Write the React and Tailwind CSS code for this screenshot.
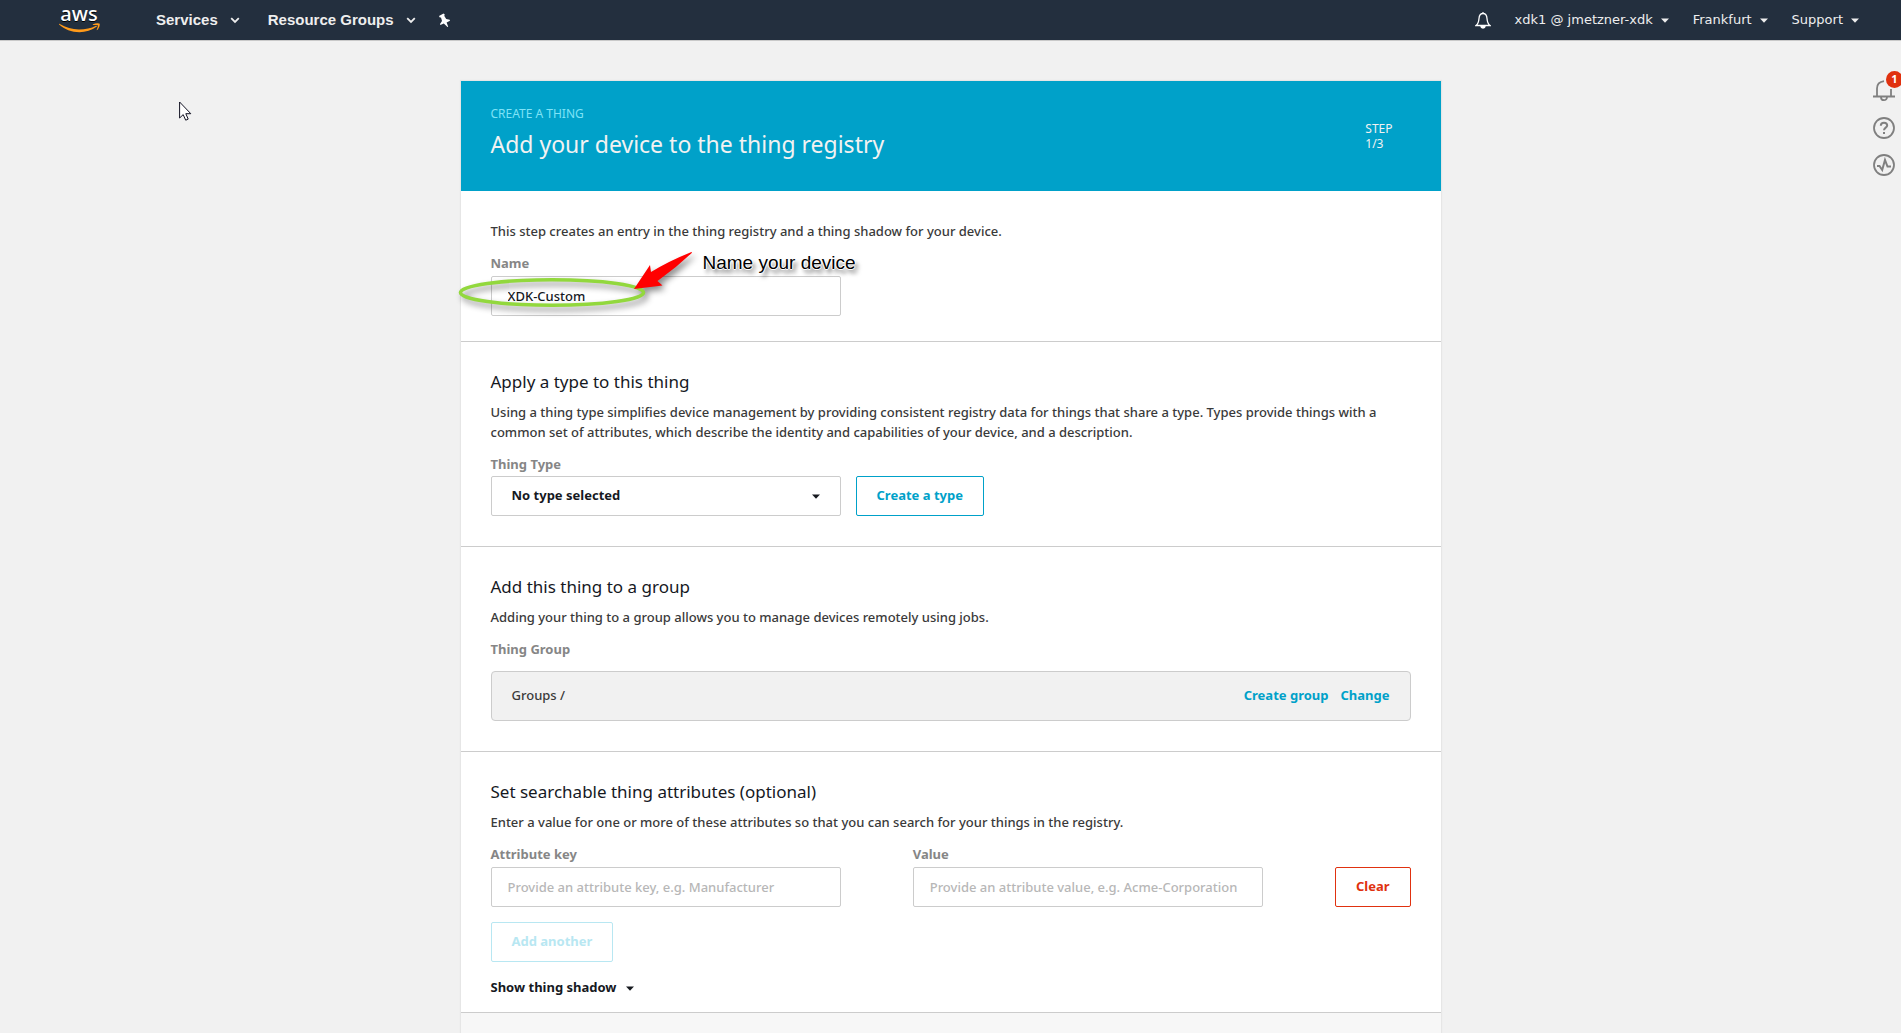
import React from "react";

const body = "text-[13px] font-medium leading-5 text-[#3a3a3a]";
const label = "block font-bold text-[13px] text-[#868686]";
const field =
  "block w-full h-10 rounded-xs border border-[#ccc] bg-white px-4 text-[13px] font-medium text-[#16191f] placeholder:text-[#b7b7b7] outline-none";
const button = "h-10 rounded-xs border px-5 text-[13px] font-bold whitespace-nowrap";

function Chevron() {
  return (
    <svg width="10" height="7" viewBox="0 0 10 7" fill="none" stroke="#eee" strokeWidth="1.800">
      <path d="M1.200 1.200 5 5 8.800 1.200" />
    </svg>
  );
}

function Caret({ className }) {
  return (
    <svg width="8" height="5" viewBox="0 0 8 5" fill="currentColor" className={className}>
      <path d="M0 .5h8L4 4.800z" />
    </svg>
  );
}

function Logo() {
  return (
    <a href="#home" aria-label="AWS home">
      <svg width="42" height="40" viewBox="0 -7 42 40" className="overflow-visible">
        <text x="20" y="14" textAnchor="middle" fontFamily="Noto Sans, sans-serif" fontSize="20" fontWeight="500" fill="#fff">
          aws
        </text>
        <path d="M.3 16.800C7 20.700 13 22.500 20 22.500c6.500 0 12-1.300 17-3.800.8-.3 1.300.6.600 1.100C33 23.400 26.500 25.200 20.500 25.200 12.500 25.200 5.500 22.300.1 17.500c-.4-.4-.2-.9.200-.7z" fill="#ff9a1a" />
        <path d="M34 17.200c2.500-1.200 6.200-1 6.600-.4.500.8-.2 4.300-2.300 6.200-.4.300-.7.100-.6-.3.600-1.300 1.500-3.900 1.100-4.400-.5-.6-3-.4-4.500-.3-.6 0-.7-.5-.3-.8z" fill="#ff9a1a" />
      </svg>
    </a>
  );
}

function TopBar() {
  return (
    <header className="flex h-[41px] items-center justify-between border-b border-[#c9c9c9] bg-[#232f3e] pr-[42px] pl-[59px] text-[#eee] [text-shadow:0_1px_0_#000]">
      <nav className="flex items-center font-['Liberation_Sans',sans-serif] text-[15px] font-bold">
        <Logo />
        <button className="ml-[55px] flex items-center gap-3">
          Services <Chevron />
        </button>
        <button className="ml-7 flex items-center gap-3">
          Resource Groups <Chevron />
        </button>
        <button className="ml-[22px]" aria-label="Pin shortcuts">
          <svg width="14" height="15" viewBox="0 0 14 15" fill="#fff">
            <path d="M5.500.5 1 3l.8 1.600 1.200-.2 1 3.600-2 3 .4 1 3.400-1.500L9.500 14l.7-.2-1.600-4.300 3.400-1.800-.3-1-3.500-.8-2-3.200.7-1z" />
          </svg>
        </button>
      </nav>
      <nav className="flex items-center font-['DejaVu_Sans',sans-serif] text-[13px]">
        <button aria-label="Notifications">
          <svg width="16" height="18" viewBox="0 0 16 18" fill="none" stroke="#fff" strokeWidth="1.300">
            <path d="M8 1v1M1 14.500c2-1.500 2.700-3 3-7C4.200 4 5.500 2.500 8 2.500S11.800 4 12 7.500c.3 4 1 5.500 3 7z" />
            <path d="M6 15.500a2 1.500 0 0 0 4 0z" fill="#fff" />
          </svg>
        </button>
        <button className="ml-6 flex items-center gap-2">
          xdk1 @ jmetzner-xdk <Caret />
        </button>
        <button className="ml-6 flex items-center gap-2">
          Frankfurt <Caret />
        </button>
        <button className="ml-6 flex items-center gap-2">
          Support <Caret />
        </button>
      </nav>
    </header>
  );
}

function SideTools() {
  return (
    <aside className="absolute top-[80px] right-[6px] flex flex-col gap-[15px] text-[#808080]">
      <button className="relative" aria-label="Alerts">
        <svg width="22" height="22" viewBox="0 0 22 22" fill="none" stroke="currentColor" strokeWidth="1.800">
          <path d="M0 16.500h22M4 16V8.500C4 4.500 6.500 1.800 11 1.200M18 16V9M8 17.200a3 3 0 0 0 6 0" />
        </svg>
        <span className="absolute -top-[9px] left-[13px] flex size-[17px] items-center justify-center rounded-full bg-[#e0310f] text-[11px] font-bold text-white">
          1
        </span>
      </button>
      <button aria-label="Help">
        <svg width="22" height="22" viewBox="0 0 22 22" fill="none" stroke="currentColor" strokeWidth="1.800">
          <circle cx="11" cy="11" r="10" />
          <path d="M7.800 8.800C7.800 6.800 9.100 5.700 11 5.700s3.200 1.100 3.200 2.800c0 2.200-3.200 2.200-3.200 4.800M11 15v2" strokeWidth="2" />
        </svg>
      </button>
      <button aria-label="Activity">
        <svg width="22" height="22" viewBox="0 0 22 22" fill="none" stroke="currentColor" strokeWidth="1.800">
          <circle cx="11" cy="11" r="10" />
          <path d="M4 12h2.500l2.700 4 2.800-10 2.500 6.500H18" strokeWidth="2" />
        </svg>
      </button>
    </aside>
  );
}

function NameAnnotation() {
  return (
    <div className="pointer-events-none absolute -top-[30px] -left-[37px] w-[420px]">
      <svg width="250" height="80" viewBox="0 0 250 80" className="[filter:drop-shadow(3px_4px_3px_rgba(0,0,0,0.45))]">
        <ellipse cx="98" cy="46.500" rx="91.500" ry="12.800" fill="none" stroke="#92d83d" strokeWidth="3.600" />
        <path d="M237.500 6Q215 15 197 26L196 19 180 43 208.500 39.500 203.500 35Q222 22 238 6.800z" fill="#f00" />
      </svg>
      <span className="absolute top-[5px] left-[249px] font-['Liberation_Sans',sans-serif] text-[19px] leading-6 whitespace-nowrap text-black [text-shadow:1px_0_#fff,-1px_0_#fff,0_1px_#fff,0_-1px_#fff,3px_4px_4px_rgba(0,0,0,0.6)]">
        Name your device
      </span>
    </div>
  );
}

function Section({ title, children }) {
  return (
    <section className="border-t border-[#ccc] px-[30px] pt-[30px]">
      <h2 className="mb-[10px] text-[17px] leading-5 text-[#16191f]">{title}</h2>
      {children}
    </section>
  );
}

export default function App() {
  return (
    <div className="relative min-h-screen overflow-x-hidden bg-[#f1f1f1] font-['Noto_Sans',sans-serif]">
      <TopBar />
      <SideTools />
      <svg width="13" height="20" viewBox="0 0 13 20" className="pointer-events-none absolute top-[101px] left-[179px]">
        <path d="M.6 1v16l3.600-3.400 2.500 5.600 2.500-1.100-2.400-5.400h5z" fill="#fff" stroke="#112" />
      </svg>

      <main className="mx-auto mt-10 flex min-h-[952px] w-full max-w-[980px] flex-col bg-white shadow-[0_0_1px_1px_#e6e6e6]">
        <div className="flex h-[110px] items-center justify-between bg-[#00a1c9] pr-12 pl-[30px]">
          <div className="pb-1">
            <p className="text-xs leading-5 text-[#7fe3f7]">CREATE A THING</p>
            <h1 className="text-[23px] leading-10 text-[#f2f2f2]">Add your device to the thing registry</h1>
          </div>
          <p className="text-xs leading-[15px] text-[#f2f2f2]">
            STEP
            <br />
            1/3
          </p>
        </div>

        <section className="px-[30px] pt-[30px] pb-[25px]">
          <p className={body}>This step creates an entry in the thing registry and a thing shadow for your device.</p>
          <label htmlFor="name" className={`${label} mt-[10px] leading-[25px]`}>
            Name
          </label>
          <div className="relative w-[350px]">
            <input id="name" className={field} defaultValue="XDK-Custom" />
            <NameAnnotation />
          </div>
        </section>

        <Section title="Apply a type to this thing">
          <p className={body}>
            Using a thing type simplifies device management by providing consistent registry data for things that share a type.
            Types provide things with a common set of attributes, which describe the identity and capabilities of your device,
            and a description.
          </p>
          <label htmlFor="type" className={`${label} mt-[10px] leading-6`}>
            Thing Type
          </label>
          <div className="flex gap-[15px] pb-[30px]">
            <div className="relative w-[350px]">
              <select
                id="type"
                className="h-10 w-full appearance-none rounded-xs border border-[#ccc] bg-white px-5 text-[13px] font-bold text-[#16191f]"
              >
                <option>No type selected</option>
              </select>
              <Caret className="pointer-events-none absolute top-[18px] right-[21px] text-[#16191f]" />
            </div>
            <button className={`${button} border-[#00a1c9] text-[#00a1c9]`}>Create a type</button>
          </div>
        </Section>

        <Section title="Add this thing to a group">
          <p className={body}>Adding your thing to a group allows you to manage devices remotely using jobs.</p>
          <p className={`${label} mt-[10px] leading-6`}>Thing Group</p>
          <div className="mt-[10px] mb-[30px] flex h-[50px] items-center rounded border border-[#ccc] bg-[#f1f1f1] px-5 text-[13px] text-[#3a3a3a]">
            <span className="mr-auto font-medium">Groups /</span>
            <a href="#create-group" className="font-bold text-[#00a1c9]">
              Create group
            </a>
            <a href="#change" className="ml-3 font-bold text-[#00a1c9]">
              Change
            </a>
          </div>
        </Section>

        <Section title="Set searchable thing attributes (optional)">
          <p className={body}>
            Enter a value for one or more of these attributes so that you can search for your things in the registry.
          </p>
          <div className="mt-[10px] flex items-end justify-between">
            <div className="w-[350px]">
              <label htmlFor="key" className={`${label} leading-[25px]`}>
                Attribute key
              </label>
              <input id="key" className={field} placeholder="Provide an attribute key, e.g. Manufacturer" />
            </div>
            <div className="w-[350px]">
              <label htmlFor="value" className={`${label} leading-[25px]`}>
                Value
              </label>
              <input id="value" className={field} placeholder="Provide an attribute value, e.g. Acme-Corporation" />
            </div>
            <button className={`${button} border-[#e0310f] text-[#e0310f]`}>Clear</button>
          </div>
          <button disabled className={`${button} mt-[15px] border-[#b8e7f2] text-[#b8e7f2]`}>
            Add another
          </button>
          <button className="mt-4 mb-[14px] flex h-5 items-center gap-[10px] text-[13px] font-bold text-[#16191f]">
            Show thing shadow <Caret />
          </button>
        </Section>
        <footer className="flex-1 border-t border-[#ccc] bg-[#f7f7f7]" />
      </main>
    </div>
  );
}
